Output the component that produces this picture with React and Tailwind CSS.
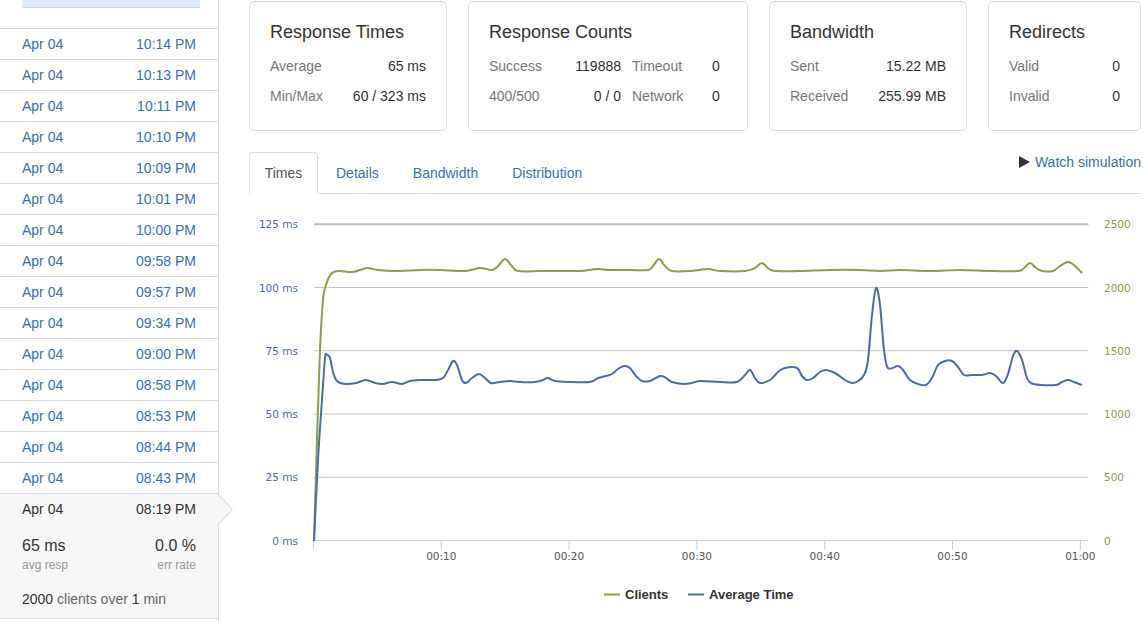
const runs = [
  "10:14 PM", "10:13 PM", "10:11 PM", "10:10 PM", "10:09 PM", "10:01 PM", "10:00 PM",
  "09:58 PM", "09:57 PM", "09:34 PM", "09:00 PM", "08:58 PM", "08:53 PM", "08:44 PM", "08:43 PM",
];

// chart points are in page pixels, the svg viewBox matches the page
const clients = [
  [314, 541], [317, 440], [320, 350], [323, 300], [326, 285], [331, 274], [338, 271], [352, 272], [360, 270],
  [368, 268], [378, 270], [395, 271], [420, 270], [440, 270], [465, 271], [480, 268], [492, 270],
  [498, 266], [505, 259], [511, 265], [518, 271], [540, 271], [560, 271], [580, 271], [597, 269],
  [610, 270], [630, 270], [648, 270], [653, 266], [659, 259], [665, 266], [672, 271], [690, 271],
  [708, 269], [720, 271], [745, 271], [755, 268], [762, 263], [769, 269], [776, 271], [800, 271],
  [830, 270], [860, 270], [880, 271], [900, 270], [930, 271], [960, 270], [990, 271], [1018, 271],
  [1024, 268], [1030, 263], [1036, 268], [1042, 271], [1053, 271], [1060, 266], [1068, 262],
  [1075, 266], [1082, 273],
];

const avgTime = [
  [314, 541], [318, 460], [322, 400], [325, 358], [327, 355], [330, 358], [333, 372], [337, 381],
  [345, 384], [356, 383], [366, 380], [375, 383], [383, 384], [392, 382], [402, 384], [410, 381],
  [420, 380], [435, 380], [443, 378], [448, 370], [453, 361], [457, 365], [462, 380], [466, 383],
  [472, 378], [479, 374], [485, 378], [491, 383], [500, 382], [510, 381], [520, 382], [535, 382],
  [543, 380], [548, 378], [555, 381], [570, 382], [590, 382], [598, 378], [606, 376], [612, 374],
  [618, 369], [624, 366], [630, 368], [636, 376], [642, 381], [650, 381], [660, 376], [666, 378],
  [672, 382], [683, 384], [692, 383], [700, 381], [720, 382], [737, 382], [745, 375], [750, 370],
  [755, 378], [760, 383], [770, 380], [778, 372], [785, 368], [797, 368], [802, 376], [807, 380],
  [813, 378], [820, 372], [826, 370], [835, 373], [845, 380], [852, 383], [858, 381], [864, 375],
  [868, 360], [872, 315], [876, 288], [880, 305], [884, 350], [888, 368], [898, 366], [903, 370],
  [910, 380], [918, 384], [926, 385], [932, 378], [938, 365], [945, 361], [952, 361], [958, 367],
  [964, 375], [972, 375], [982, 375], [990, 373], [996, 376], [1003, 383], [1008, 374], [1013, 356],
  [1017, 351], [1022, 360], [1027, 378], [1031, 383], [1040, 385], [1056, 385], [1062, 382],
  [1068, 380], [1074, 382], [1082, 385],
];

function smoothPath(pts) {
  let d = `M${pts[0][0]},${pts[0][1]}`;
  for (let i = 0; i < pts.length - 1; i++) {
    const p0 = pts[i - 1] || pts[i];
    const p1 = pts[i];
    const p2 = pts[i + 1];
    const p3 = pts[i + 2] || p2;
    const c1x = p1[0] + (p2[0] - p0[0]) / 6;
    const c1y = p1[1] + (p2[1] - p0[1]) / 6;
    const c2x = p2[0] - (p3[0] - p1[0]) / 6;
    const c2y = p2[1] - (p3[1] - p1[1]) / 6;
    d += ` C${c1x.toFixed(1)},${c1y.toFixed(1)} ${c2x.toFixed(1)},${c2y.toFixed(1)} ${p2[0]},${p2[1]}`;
  }
  return d;
}

const GREEN = "#8a9e4b";
const BLUE = "#4b6ca6";
const gridY = [0, 1, 2, 3, 4, 5].map((i) => 540.5 - i * 63.25);
const leftLabels = ["0 ms", "25 ms", "50 ms", "75 ms", "100 ms", "125 ms"];
const rightLabels = ["0", "500", "1000", "1500", "2000", "2500"];
const ticks = ["", "00:10", "00:20", "00:30", "00:40", "00:50", "01:00"];

function Chart() {
  const axisFont = { fontFamily: "'DejaVu Sans', Verdana, sans-serif", fontSize: 10.5 };
  return (
    <svg width="892" height="427" viewBox="249 194 892 427" className="block">
      {gridY.map((y, i) =>
        i === 0 ? null : (
          <line
            key={y}
            x1="314"
            x2="1088.5"
            y1={y}
            y2={y}
            stroke={i === 5 ? "#bdbdbd" : "#c4c4c4"}
            strokeWidth={i === 5 ? 2 : 1}
          />
        ),
      )}
      <line x1="313.5" x2="1088.5" y1="540.5" y2="540.5" stroke="#c3d2e2" />
      {ticks.map((t, i) => {
        const x = 313.5 + i * 127.8;
        return (
          <g key={i}>
            <line x1={x} x2={x} y1="540.5" y2="550" stroke="#c3d2e2" />
            {t && (
              <text x={x} y="560" textAnchor="middle" fill="#555" style={axisFont}>
                {t}
              </text>
            )}
          </g>
        );
      })}
      {leftLabels.map((l, i) => (
        <text key={l} x="298" y={gridY[i] + 4} textAnchor="end" fill="#4d6a9f" style={axisFont}>
          {l}
        </text>
      ))}
      {rightLabels.map((l, i) => (
        <text key={l} x="1104" y={gridY[i] + 4} fill="#8b9e4d" style={axisFont}>
          {l}
        </text>
      ))}
      <path d={smoothPath(clients)} fill="none" stroke={GREEN} strokeWidth="2" />
      <path d={smoothPath(avgTime)} fill="none" stroke={BLUE} strokeWidth="2" />

      {/* legend */}
      <line x1="604" x2="620" y1="594.5" y2="594.5" stroke={GREEN} strokeWidth="2" />
      <text x="625" y="599" fill="#333" fontWeight="bold" style={{ fontFamily: "'Liberation Sans', Arial, sans-serif", fontSize: 13 }}>
        Clients
      </text>
      <line x1="688" x2="704" y1="594.5" y2="594.5" stroke={BLUE} strokeWidth="2" />
      <text x="709" y="599" fill="#333" fontWeight="bold" style={{ fontFamily: "'Liberation Sans', Arial, sans-serif", fontSize: 13 }}>
        Average Time
      </text>
    </svg>
  );
}

function Card({ title, width, children }) {
  return (
    <div className={`${width} h-[130px] shrink-0 rounded-[5px] border border-[#dcdcdc] px-[20px] pt-[20px]`}>
      <div className="text-[18px] leading-[20px] text-[#333]">{title}</div>
      <div className="mt-[9px]">{children}</div>
    </div>
  );
}

function Row({ label, value }) {
  return (
    <div className="flex h-[30px] items-center justify-between">
      <span className="text-[#777]">{label}</span>
      <span className="text-[#333]">{value}</span>
    </div>
  );
}

export default function App() {
  return (
    <div
      className="flex h-[621px] w-[1143px] overflow-hidden bg-white text-[14px]"
      style={{ fontFamily: "'Liberation Sans', Arial, Helvetica, sans-serif" }}
    >
      {/* Sidebar */}
      <div className="relative w-[219px] shrink-0 border-r border-[#dddddd]">
        <div className="mx-[22px] h-[8px] w-[178px] border-b border-[#c9d8ee] bg-[#e0eaf7]" />
        <div className="mt-[20px] border-t border-[#dddddd]">
          {runs.map((t) => (
            <div
              key={t}
              className="flex h-[31px] items-center justify-between border-b border-[#dddddd] px-[22px] text-[#3a6eb5]"
            >
              <span>Apr 04</span>
              <span>{t}</span>
            </div>
          ))}
          <div className="relative border-b border-[#dddddd] bg-[#f7f7f7] px-[22px] pb-[9px]">
            <div className="flex h-[31px] items-center justify-between text-[#333]">
              <span>Apr 04</span>
              <span>08:19 PM</span>
            </div>
            <div className="mt-[11px] flex justify-between">
              <div>
                <div className="text-[16px] leading-[20px] text-[#333]">65 ms</div>
                <div className="mt-[1px] text-[12px] leading-[16px] text-[#999]">avg resp</div>
              </div>
              <div className="text-right">
                <div className="text-[16px] leading-[20px] text-[#333]">0.0 %</div>
                <div className="mt-[1px] text-[12px] leading-[16px] text-[#999]">err rate</div>
              </div>
            </div>
            <div className="mt-[16px] leading-[20px] text-[#666]">
              <span className="text-[#333]">2000</span> clients over <span className="text-[#333]">1</span> min
            </div>
            <svg className="absolute left-full top-0" width="16" height="32" viewBox="0 0 16 32">
              <polygon points="0,0 14.5,15.5 0,31" fill="#f7f7f7" />
              <polyline points="0,0 14.5,15.5 0,31" fill="none" stroke="#d4d4d4" strokeWidth="1" />
            </svg>
          </div>
        </div>
      </div>

      {/* Main */}
      <div className="ml-[30px] w-[892px] pt-[1px]">
        <div className="flex gap-[21px]">
          <Card title="Response Times" width="w-[198px]">
            <Row label="Average" value="65 ms" />
            <Row label="Min/Max" value="60 / 323 ms" />
          </Card>
          <Card title="Response Counts" width="w-[280px]">
            {[
              ["Success", "119888", "Timeout", "0"],
              ["400/500", "0 / 0", "Network", "0"],
            ].map((r) => (
              <div key={r[0]} className="flex h-[30px] items-center">
                <div className="flex w-[132px] justify-between">
                  <span className="text-[#777]">{r[0]}</span>
                  <span className="text-[#333]">{r[1]}</span>
                </div>
                <span className="ml-[11px] w-[80px] text-[#777]">{r[2]}</span>
                <span className="text-[#333]">{r[3]}</span>
              </div>
            ))}
          </Card>
          <Card title="Bandwidth" width="w-[198px]">
            <Row label="Sent" value="15.22 MB" />
            <Row label="Received" value="255.99 MB" />
          </Card>
          <Card title="Redirects" width="w-[153px]">
            <Row label="Valid" value="0" />
            <Row label="Invalid" value="0" />
          </Card>
        </div>

        {/* Tabs */}
        <div className="mt-[21px] flex items-start justify-between border-b border-[#dddddd]">
          <div className="-mb-px flex">
            <div className="flex h-[42px] w-[69px] items-center justify-center rounded-t-[4px] border border-b-transparent border-[#dddddd] bg-white text-[#555]">
              Times
            </div>
            {["Details", "Bandwidth", "Distribution"].map((t) => (
              <div key={t} className="ml-[2px] flex h-[42px] items-center px-[16px] text-[#3a6eb5]">
                {t}
              </div>
            ))}
          </div>
          <div className="flex h-[20px] items-center gap-[5px] text-[#3a6eb5]">
            <svg width="11" height="12" viewBox="0 0 11 12">
              <polygon points="0,0 11,6 0,12" fill="#333" />
            </svg>
            <span>Watch simulation</span>
          </div>
        </div>

        <Chart />
      </div>
    </div>
  );
}
